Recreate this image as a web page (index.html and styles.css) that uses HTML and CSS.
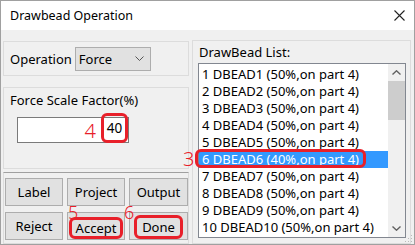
FILE: index.html
```html
<!DOCTYPE html>
<html>
<head>
  <title>Drawbead Operation</title>
  <link rel="stylesheet" href="styles.css">
</head>
<body>

<div class="window">
  <div class="titlebar">
    <span class="title">Drawbead Operation</span>
    <svg class="close" width="11" height="11" viewBox="0 0 11 11">
      <path d="M0.5 0.5 L10.5 10.5 M10.5 0.5 L0.5 10.5" stroke="#222" stroke-width="1.1" fill="none"/>
    </svg>
  </div>

  <div class="content">
    <div class="left">
      <div class="group op">
        <span>Operation</span>
        <div class="select">
          <span>Force</span>
          <svg width="9" height="5" viewBox="0 0 9 5">
            <path d="M0.5 0.5 L4.5 4.5 L8.5 0.5" stroke="#555" stroke-width="1" fill="none"/>
          </svg>
        </div>
      </div>

      <div class="group scale">
        <div class="caption">Force Scale Factor(%)</div>
        <div class="field">
          <span class="num">4</span>
          <span class="ring value">40</span>
        </div>
      </div>

      <div class="group buttons">
        <button>Label</button>
        <button>Project</button>
        <button>Output</button>
        <button>Reject</button>
        <button><span class="num tag5">5</span><span class="ring accept">Accept</span></button>
        <button><span class="num tag6">6</span><span class="ring done">Done</span></button>
      </div>
    </div>

    <div class="group right">
      <div class="caption">DrawBead List:</div>
      <div class="listbox">
        <ul class="items">
          <li>1 DBEAD1 (50%,on part 4)</li>
          <li>2 DBEAD2 (50%,on part 4)</li>
          <li>3 DBEAD3 (50%,on part 4)</li>
          <li>4 DBEAD4 (50%,on part 4)</li>
          <li>5 DBEAD5 (50%,on part 4)</li>
          <li class="sel"><span class="num tag3">3</span><span class="row-ring"></span>6 DBEAD6 (40%,on part 4)</li>
          <li>7 DBEAD7 (50%,on part 4)</li>
          <li>8 DBEAD8 (50%,on part 4)</li>
          <li>9 DBEAD9 (50%,on part 4)</li>
          <li>10 DBEAD10 (50%,on part 4)</li>
        </ul>
        <div class="scrollbar">
          <div class="arrow">
            <svg width="9" height="5" viewBox="0 0 9 5"><path d="M0.5 4.5 L4.5 0.8 L8.5 4.5" stroke="#606060" stroke-width="1.4" fill="none"/></svg>
          </div>
          <div class="thumb"></div>
          <div class="track"></div>
          <div class="arrow">
            <svg width="9" height="5" viewBox="0 0 9 5"><path d="M0.5 0.5 L4.5 4.2 L8.5 0.5" stroke="#606060" stroke-width="1.4" fill="none"/></svg>
          </div>
        </div>
      </div>
    </div>
  </div>

  <svg class="grip" width="9" height="9" viewBox="0 0 9 9">
    <rect x="7" y="1" width="1" height="1" fill="#bbb"/>
    <rect x="4" y="4" width="1" height="1" fill="#bbb"/>
    <rect x="7" y="4" width="1" height="1" fill="#bbb"/>
    <rect x="1" y="7" width="1" height="1" fill="#bbb"/>
    <rect x="4" y="7" width="1" height="1" fill="#bbb"/>
    <rect x="7" y="7" width="1" height="1" fill="#bbb"/>
  </svg>
</div>

</body>
</html>
```

FILE: styles.css
```css
body {
  margin: 0;
  font-family: "Noto Sans", sans-serif;
  font-size: 13px;
  color: #000;
}

.window {
  position: relative;
  width: 415px;
  height: 245px;
  box-sizing: border-box;
  border: 1px solid #a0a0a0;
  background-color: #f0f0f0;
  display: flex;
  flex-direction: column;
}

.titlebar {
  height: 29px;
  flex-shrink: 0;
  background-color: #fff;
  display: flex;
  align-items: center;
  justify-content: space-between;
  padding: 0 9px 0 9px;
}

.title {
  font-size: 12.5px;
}

.content {
  flex: 1;
  display: flex;
  gap: 3px;
  padding: 10px 3px 0 2px;
}

.left {
  width: 186px;
  margin-top: 1px;
  display: flex;
  flex-direction: column;
}

.group {
  box-sizing: border-box;
  border: 1px solid #dcdcdc;
}

.caption {
  line-height: 17px;
  padding-left: 6px;
}

/* operation */
.op {
  height: 35px;
  margin-bottom: 11px;
  display: flex;
  align-items: center;
  padding-left: 6px;
}

.select {
  width: 76px;
  height: 24px;
  box-sizing: border-box;
  margin-left: 3px;
  border: 1px solid #adadad;
  background-color: #e1e1e1;
  display: flex;
  align-items: center;
  justify-content: space-between;
  padding: 0 6px 0 3px;
}

/* scale factor */
.scale {
  height: 82px;
  margin-bottom: 3px;
  padding-top: 4px;
}

.field {
  width: 112px;
  height: 26px;
  box-sizing: border-box;
  margin: 8px 0 0 13px;
  border: 1px solid #7a7a7a;
  background-color: #fff;
  display: flex;
  justify-content: flex-end;
  align-items: flex-end;
}

.num {
  color: #e8202a;
  font-size: 20px;
  line-height: 20px;
  font-weight: 300;
}

.field .num {
  margin: 0 5px 1px 0;
}

.ring {
  box-sizing: border-box;
  border: 3px solid #e8202a;
  border-radius: 6px;
  display: flex;
  align-items: center;
  justify-content: center;
}

.ring.value {
  width: 27px;
  height: 30px;
  margin-bottom: -1px;
  font-size: 13.5px;
}

/* buttons */
.buttons {
  flex: 1;
  border-top-color: #a0a0a0;
  padding: 5px 0 0 1px;
  display: grid;
  grid-template-columns: 58px 58px 59px;
  grid-auto-rows: 28px;
  column-gap: 4px;
  row-gap: 6px;
  align-content: start;
}

button {
  position: relative;
  font-family: inherit;
  font-size: 13px;
  color: #000;
  background-color: #e1e1e1;
  border: 1px solid #adadad;
  padding: 0;
  display: flex;
  align-items: center;
  justify-content: center;
}

.ring.accept {
  height: 22px;
  padding: 0 4px;
  margin-top: 3px;
}

.ring.done {
  height: 24px;
  padding: 0 5px;
  margin-top: 1px;
}

.tag5,
.tag6,
.tag3 {
  position: absolute;
  font-size: 18px;
  line-height: 18px;
}

.tag5 {
  left: 0;
  top: -10px;
}

.tag6 {
  left: -6px;
  top: -10px;
}

/* drawbead list */
.right {
  flex: 1;
  padding-top: 3px;
}

.listbox {
  height: 175px;
  box-sizing: border-box;
  margin: 2px 4px 0 5px;
  border: 1px solid #828790;
  background-color: #fff;
  display: flex;
}

.items {
  flex: 1;
  list-style: none;
  margin: 0;
  padding: 2px 0 0 0;
}

.items li {
  position: relative;
  height: 17px;
  line-height: 17px;
  padding-left: 3px;
  white-space: nowrap;
}

.items li.sel {
  background-color: #3399ff;
  color: #fff;
}

.row-ring {
  position: absolute;
  left: -4px;
  top: -2px;
  width: 171px;
  height: 19px;
  box-sizing: border-box;
  border: 3px solid #e8202a;
  border-radius: 6px;
}

.tag3 {
  left: -16px;
  top: -2px;
  font-size: 20px;
  line-height: 20px;
}

.scrollbar {
  width: 17px;
  background-color: #f0f0f0;
  display: flex;
  flex-direction: column;
}

.arrow {
  height: 17px;
  display: flex;
  align-items: center;
  justify-content: center;
}

.thumb {
  height: 39px;
  background-color: #cdcdcd;
}

.track {
  flex: 1;
}

.grip {
  position: absolute;
  right: 1px;
  bottom: 1px;
}
```
